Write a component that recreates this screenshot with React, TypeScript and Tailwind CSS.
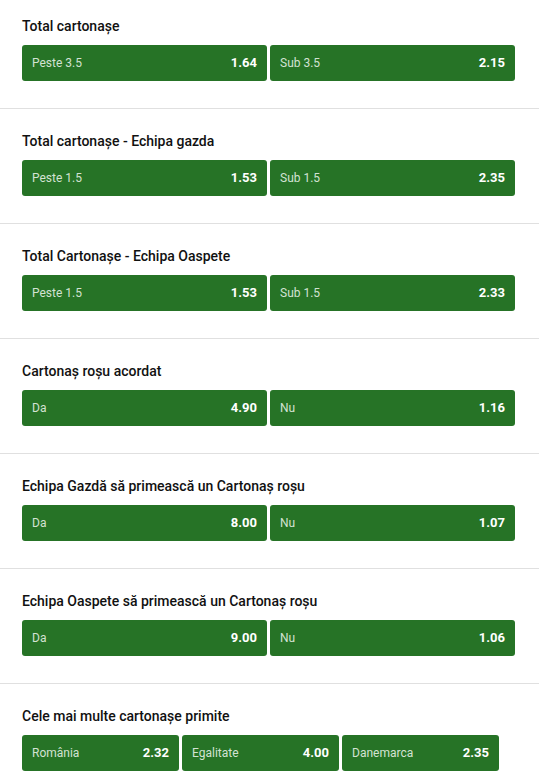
type Outcome = { label: string; odds: string }
type Market = { title: string; outcomes: Outcome[] }

const markets: Market[] = [
  { title: 'Total cartonașe', outcomes: [{ label: 'Peste 3.5', odds: '1.64' }, { label: 'Sub 3.5', odds: '2.15' }] },
  { title: 'Total cartonașe - Echipa gazda', outcomes: [{ label: 'Peste 1.5', odds: '1.53' }, { label: 'Sub 1.5', odds: '2.35' }] },
  { title: 'Total Cartonașe - Echipa Oaspete', outcomes: [{ label: 'Peste 1.5', odds: '1.53' }, { label: 'Sub 1.5', odds: '2.33' }] },
  { title: 'Cartonaș roșu acordat', outcomes: [{ label: 'Da', odds: '4.90' }, { label: 'Nu', odds: '1.16' }] },
  { title: 'Echipa Gazdă să primească un Cartonaș roșu', outcomes: [{ label: 'Da', odds: '8.00' }, { label: 'Nu', odds: '1.07' }] },
  { title: 'Echipa Oaspete să primească un Cartonaș roșu', outcomes: [{ label: 'Da', odds: '9.00' }, { label: 'Nu', odds: '1.06' }] },
  {
    title: 'Cele mai multe cartonașe primite',
    outcomes: [
      { label: 'România', odds: '2.32' },
      { label: 'Egalitate', odds: '4.00' },
      { label: 'Danemarca', odds: '2.35' },
    ],
  },
]

function OddsButton({ outcome, three }: { outcome: Outcome; three: boolean }) {
  return (
    <button
      className={
        'flex h-9 items-center justify-between rounded-[3px] bg-[#267326] px-[10px] ' +
        (three ? 'w-[157px]' : 'w-[245px]')
      }
    >
      <span className="text-[12px] text-[#d3e2d3]">{outcome.label}</span>
      <span className="text-[13px] font-bold text-white">{outcome.odds}</span>
    </button>
  )
}

export default function App() {
  return (
    <div className="min-h-screen bg-white font-['Roboto',sans-serif]">
      {markets.map((m, i) => {
        const three = m.outcomes.length === 3
        return (
          <section
            key={m.title}
            className={
              'border-b border-[#e0e0e0] pb-[27px] pl-[22px] pr-[24px] ' +
              (i === 0 ? 'pt-[18px]' : 'pt-[24px]')
            }
          >
            <h2 className="mb-[11px] text-[14px] leading-4 font-medium text-[#111111]">{m.title}</h2>
            <div className="flex gap-[3px]">
              {m.outcomes.map((o) => (
                <OddsButton key={o.label} outcome={o} three={three} />
              ))}
            </div>
          </section>
        )
      })}
    </div>
  )
}
